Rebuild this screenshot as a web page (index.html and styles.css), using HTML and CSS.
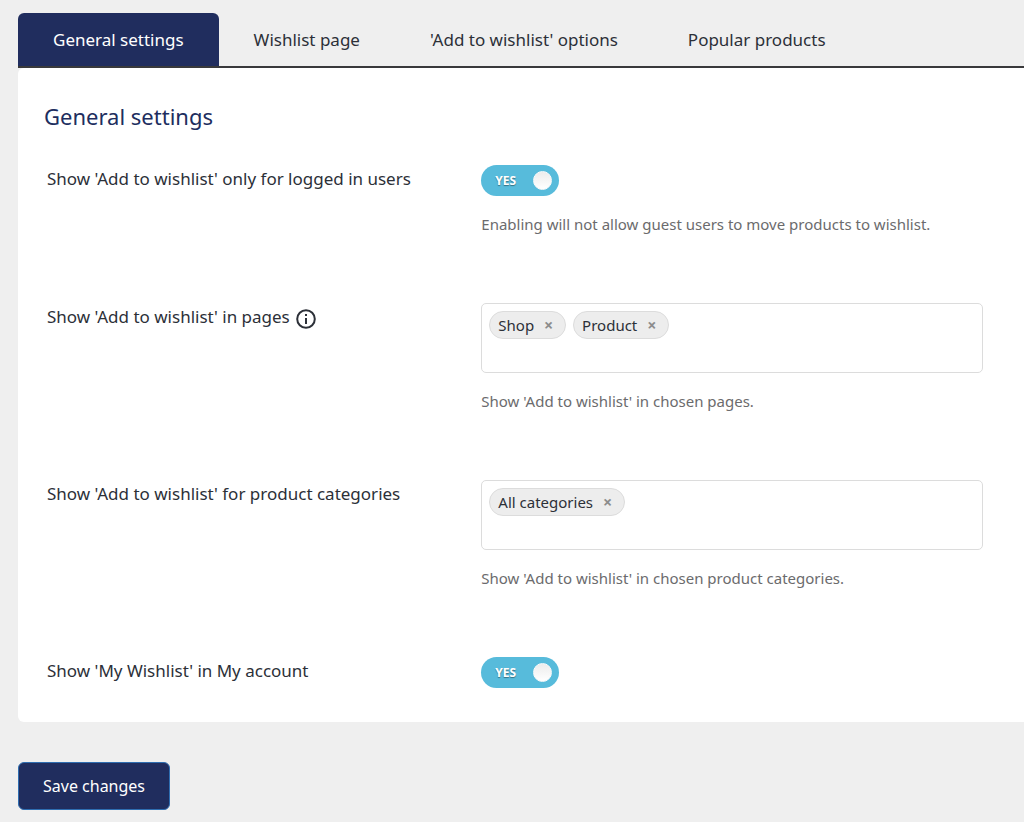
FILE: index.html
```html
<!DOCTYPE html>
<html lang="en">
<head>
    <meta charset="UTF-8">
    <meta name="viewport" content="width=device-width, initial-scale=1.0">
    <title>Wishlist settings</title>
    <link rel="stylesheet" href="styles.css">
</head>
<body>
    <form class="settings">
        <nav class="tabs">
            <a class="tab active" href="#general">General settings</a>
            <a class="tab" href="#page">Wishlist page</a>
            <a class="tab" href="#options">'Add to wishlist' options</a>
            <a class="tab" href="#popular">Popular products</a>
        </nav>

        <section class="panel" id="general">
            <h2>General settings</h2>

            <div class="row">
                <label class="row-label" for="loggedIn">Show 'Add to wishlist' only for logged in users</label>
                <div class="field">
                    <label class="switch">
                        <input type="checkbox" id="loggedIn" checked>
                        <span>YES</span>
                    </label>
                    <p class="hint">Enabling will not allow guest users to move products to wishlist.</p>
                </div>
            </div>

            <div class="row">
                <label class="row-label" for="pages">Show 'Add to wishlist' in pages
                    <svg class="info" viewBox="0 0 20 20" aria-hidden="true">
                        <circle cx="10" cy="10" r="8.8" fill="none" stroke="currentColor" stroke-width="2"/>
                        <path d="M10 9v6" stroke="currentColor" stroke-width="2"/>
                        <path d="M10 5v2" stroke="currentColor" stroke-width="2"/>
                    </svg>
                </label>
                <div class="field">
                    <div class="select-box">
                        <span class="tag">Shop <button type="button" aria-label="Remove Shop">×</button></span>
                        <span class="tag">Product <button type="button" aria-label="Remove Product">×</button></span>
                        <input type="text" id="pages">
                    </div>
                    <p class="hint">Show 'Add to wishlist' in chosen pages.</p>
                </div>
            </div>

            <div class="row">
                <label class="row-label" for="categories">Show 'Add to wishlist' for product categories</label>
                <div class="field">
                    <div class="select-box">
                        <span class="tag">All categories <button type="button" aria-label="Remove All categories">×</button></span>
                        <input type="text" id="categories">
                    </div>
                    <p class="hint">Show 'Add to wishlist' in chosen product categories.</p>
                </div>
            </div>

            <div class="row">
                <label class="row-label" for="myAccount">Show 'My Wishlist' in My account</label>
                <div class="field">
                    <label class="switch">
                        <input type="checkbox" id="myAccount" checked>
                        <span>YES</span>
                    </label>
                </div>
            </div>
        </section>

        <button type="submit" class="save">Save changes</button>
    </form>
</body>
</html>
```
FILE: styles.css
```css
* {
    box-sizing: border-box;
}
body {
    margin: 0;
    background: #efefef;
    color: #2c3038;
    font-family: "Segoe UI", "Noto Sans", sans-serif;
    font-size: 17px;
    line-height: 24px;
}
.settings {
    padding: 13px 0 12px 18px;
}
.tabs {
    display: flex;
    border-bottom: 2px solid #39393b;
}
.tab {
    padding: 15px 35px 14px;
    color: inherit;
    text-decoration: none;
    border-radius: 6px 6px 0 0;
}
.tab.active {
    background: #202d5e;
    color: white;
}
.panel {
    padding: 32px 41px 34px 26px;
    background: white;
    border-radius: 6px 0 0 6px;
}
h2 {
    margin: 0 0 33px;
    color: #202d5e;
    font-size: 22px;
    font-weight: normal;
    line-height: 32px;
}
.row {
    display: grid;
    grid-template-columns: 46.4% 1fr;
    margin-bottom: 67px;
    padding-left: 3px;
}
.row:last-child {
    margin-bottom: 0;
}
.row-label {
    display: flex;
    align-items: center;
    align-self: start;
    gap: 6px;
    height: 28px;
}
.info {
    width: 20px;
    height: 20px;
    margin-top: 3px;
}
.hint {
    margin: 16px 0 0;
    color: #6b6b6d;
    font-size: 15px;
}

/* yes/no switch */
.switch {
    display: flex;
    align-items: center;
    position: relative;
    width: 78px;
    height: 31px;
    padding-left: 14px;
    color: white;
    font-size: 12px;
    font-weight: bold;
    text-shadow: 0 1px 1px rgba(0, 0, 0, 0.4);
    cursor: pointer;
}
.switch input {
    appearance: none;
    position: absolute;
    inset: 0;
    margin: 0;
    background: #57bbdb;
    border-radius: 16px;
    cursor: pointer;
}
.switch input::after {
    content: "";
    position: absolute;
    top: 6px;
    right: 7px;
    width: 17px;
    height: 17px;
    background: linear-gradient(#ececec, #fff);
    border: 1px solid #fafafa;
    border-radius: 50%;
}
.switch span {
    position: relative;
}

/* tag select */
.select-box {
    display: flex;
    flex-wrap: wrap;
    align-content: flex-start;
    gap: 7px;
    min-height: 70px;
    padding: 7px;
    background: white;
    border: 1px solid #dcdcdc;
    border-radius: 5px;
}
.select-box input {
    flex: 1;
    min-width: 40px;
    height: 28px;
    padding: 0;
    background: none;
    border: none;
    outline: none;
    font: inherit;
}
.tag {
    display: flex;
    align-items: center;
    gap: 7px;
    height: 28px;
    padding: 0 9px 0 8px;
    background: #ededed;
    border: 1px solid #dcdcdc;
    border-radius: 14px;
    font-size: 15px;
}
.tag button {
    width: 15px;
    padding: 0;
    background: none;
    border: none;
    color: #8c8c8c;
    font-family: inherit;
    font-size: 16px;
    font-weight: bold;
    line-height: 24px;
    cursor: pointer;
}
.save {
    margin-top: 40px;
    padding: 11px 24px;
    background: #202d5e;
    border: 1px solid #2e6db0;
    border-radius: 6px;
    color: white;
    font-family: inherit;
    font-size: 16px;
    line-height: 24px;
    cursor: pointer;
}
.save:hover {
    background: #2b3a75;
}
```
